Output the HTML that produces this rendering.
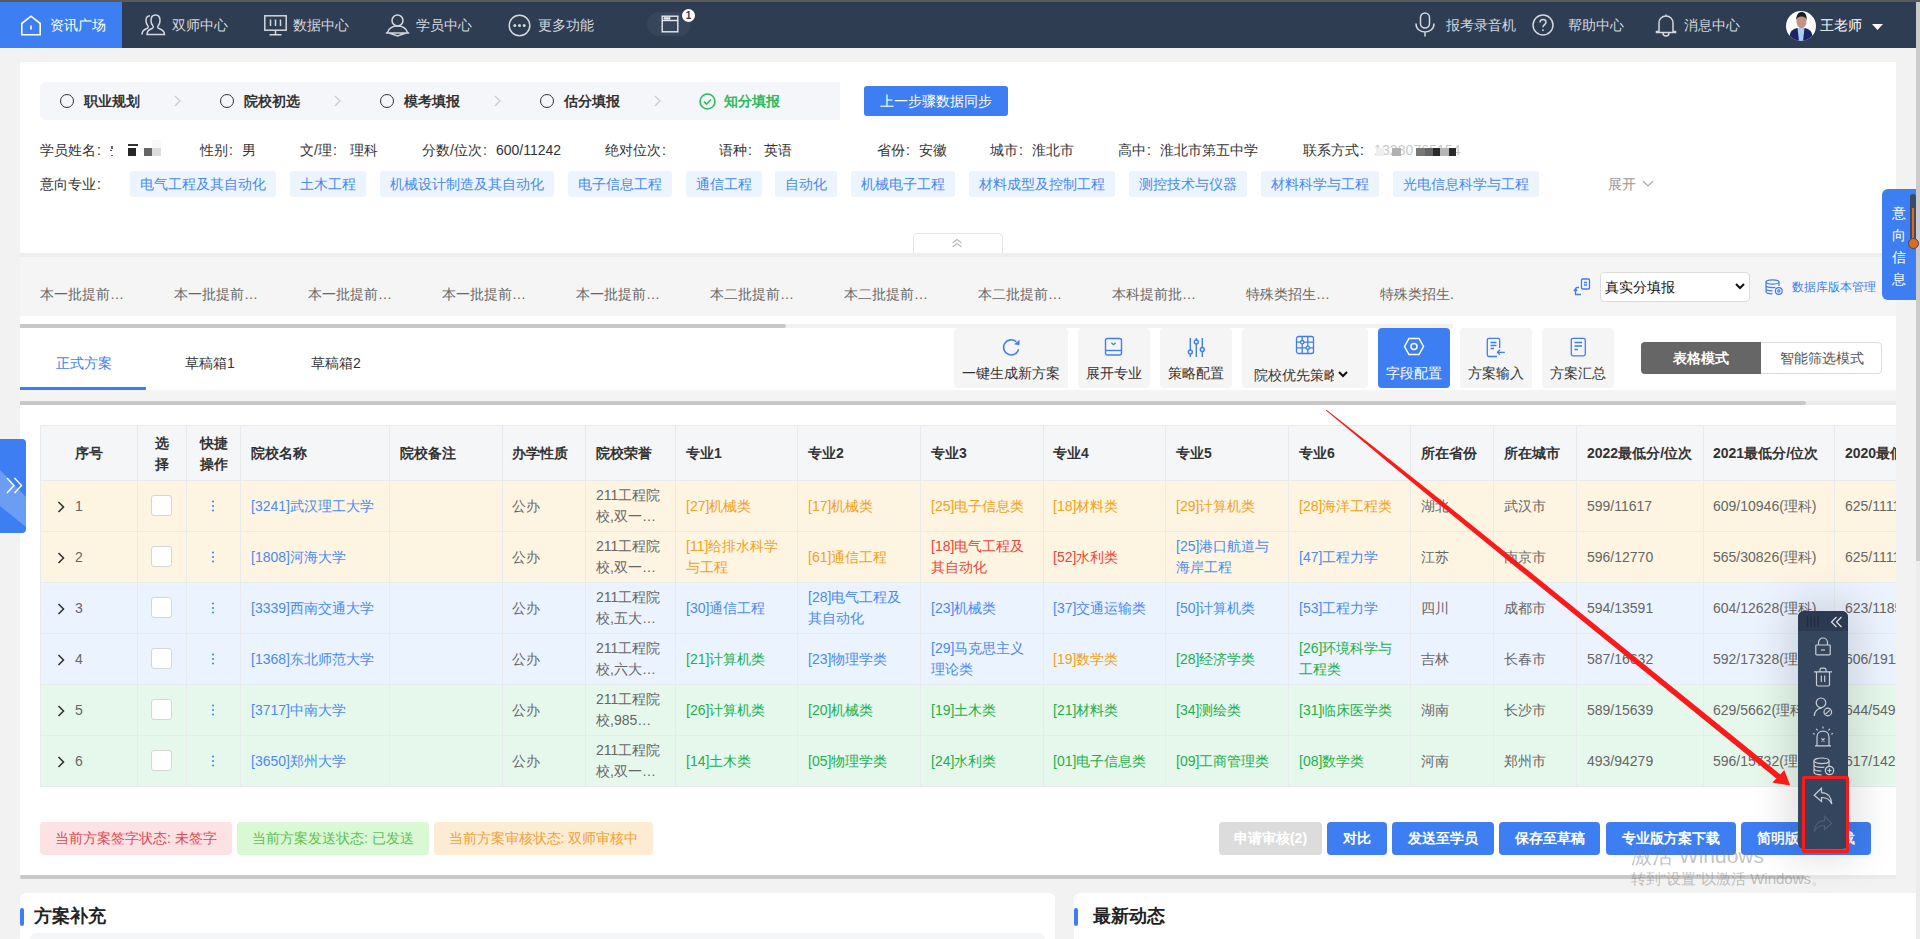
<!DOCTYPE html>
<html><head><meta charset="utf-8">
<style>
*{box-sizing:border-box;}
html,body{margin:0;padding:0;}
body{width:1920px;height:939px;overflow:hidden;position:relative;background:#f2f2f2;font-family:"Liberation Sans",sans-serif;font-size:14px;color:#333;}
.a{position:absolute;white-space:nowrap;}
.nav{position:absolute;left:0;top:0;width:1916px;height:48px;background:#2f3d53;}
.navt{position:absolute;top:16px;line-height:18px;color:#d4d8de;font-size:14px;white-space:nowrap;}
.ico{position:absolute;}
.step{position:absolute;top:92px;line-height:18px;font-weight:bold;color:#333;}
.circ{position:absolute;top:94px;width:14px;height:14px;border:1.3px solid #333;border-radius:50%;}
.chev{position:absolute;top:95px;}
.info{position:absolute;top:141px;line-height:18px;color:#333;white-space:nowrap;}
.tag{position:absolute;top:171px;height:26px;line-height:26px;padding:0 10px;background:#ecf4fe;color:#4789f3;border-radius:3px;white-space:nowrap;}
.batch{position:absolute;top:285px;line-height:18px;color:#666;white-space:nowrap;}
.tb{position:absolute;top:328px;height:60px;background:#f5f5f5;border-radius:4px;}
.tbl{position:absolute;top:364px;line-height:18px;color:#333;white-space:nowrap;}
</style></head><body>
<!-- top strip -->
<div class="a" style="left:0;top:0;width:1920px;height:2px;background:#5a5a5a;"></div>
<div class="nav" style="top:2px;height:46px;"></div>
<div class="a" style="left:0;top:2px;width:122px;height:46px;background:#3e7ef3;"></div>
<!-- right scrollbar -->
<div class="a" style="left:1916px;top:2px;width:4px;height:937px;background:#ececec;"></div>
<div class="a" style="left:1916px;top:2px;width:4px;height:559px;background:#cbcbcb;"></div>



<!-- card 1 -->
<div class="a" style="left:20px;top:62px;width:1876px;height:191px;background:#fff;"></div>
<div class="a" style="left:40px;top:82px;width:800px;height:38px;background:#f5f6fa;border-radius:6px 0 0 6px;"></div>
<div class="circ" style="left:60px"></div><div class="step" style="left:84px">职业规划</div>
<svg class="chev" style="left:174px" width="7" height="12" viewBox="0 0 7 12" fill="none" stroke="#c6c9cf" stroke-width="1.2"><path d="M1 1L6 6L1 11"/></svg>
<div class="circ" style="left:220px"></div><div class="step" style="left:244px">院校初选</div>
<svg class="chev" style="left:334px" width="7" height="12" viewBox="0 0 7 12" fill="none" stroke="#c6c9cf" stroke-width="1.2"><path d="M1 1L6 6L1 11"/></svg>
<div class="circ" style="left:380px"></div><div class="step" style="left:404px">模考填报</div>
<svg class="chev" style="left:494px" width="7" height="12" viewBox="0 0 7 12" fill="none" stroke="#c6c9cf" stroke-width="1.2"><path d="M1 1L6 6L1 11"/></svg>
<div class="circ" style="left:540px"></div><div class="step" style="left:564px">估分填报</div>
<svg class="chev" style="left:654px" width="7" height="12" viewBox="0 0 7 12" fill="none" stroke="#c6c9cf" stroke-width="1.2"><path d="M1 1L6 6L1 11"/></svg>
<svg class="ico" style="left:699px;top:93px" width="17" height="17" viewBox="0 0 17 17" fill="none" stroke="#2dba5e" stroke-width="1.6"><circle cx="8.5" cy="8.5" r="7.5"/><path d="M5 8.7L7.6 11.2L12 6.5"/></svg>
<div class="step" style="left:724px;color:#2dba5e">知分填报</div>
<div class="a" style="left:864px;top:86px;width:144px;height:30px;background:#3e7ef3;border-radius:3px;color:#fff;text-align:center;line-height:30px;">上一步骤数据同步</div>

<div class="info" style="left:40px">学员姓名<span style="display:inline-block;width:14px;padding-left:1px">:</span></div>
<div class="a" style="left:111px;top:146px;width:2px;height:3px;background:#666"></div>
<div class="a" style="left:110px;top:150px;width:2px;height:1px;background:#555"></div>
<div class="a" style="left:111px;top:155px;width:2px;height:1px;background:#666"></div>
<div class="a" style="left:128px;top:144px;width:10px;height:2px;background:#333"></div>
<div class="a" style="left:128px;top:148px;width:8px;height:8px;background:#262626"></div>
<div class="a" style="left:144px;top:148px;width:8px;height:8px;background:#646464"></div>
<div class="a" style="left:152px;top:140px;width:9px;height:8px;background:#f8f8f8"></div>
<div class="a" style="left:152px;top:148px;width:9px;height:8px;background:#dcdcdc"></div>
<div class="info" style="left:200px">性别<span style="display:inline-block;width:14px;padding-left:1px">:</span>男</div>
<div class="info" style="left:300px">文/理<span style="display:inline-block;width:14px;padding-left:1px">:</span></div><div class="info" style="left:350px">理科</div>
<div class="info" style="left:422px">分数/位次<span style="display:inline-block;width:14px;padding-left:1px">:</span>600/11242</div>
<div class="info" style="left:605px">绝对位次<span style="display:inline-block;width:14px;padding-left:1px">:</span></div>
<div class="info" style="left:719px">语种<span style="display:inline-block;width:14px;padding-left:1px">:</span></div><div class="info" style="left:764px">英语</div>
<div class="info" style="left:877px">省份<span style="display:inline-block;width:14px;padding-left:1px">:</span>安徽</div>
<div class="info" style="left:990px">城市<span style="display:inline-block;width:14px;padding-left:1px">:</span>淮北市</div>
<div class="info" style="left:1118px">高中<span style="display:inline-block;width:14px;padding-left:1px">:</span>淮北市第五中学</div>
<div class="info" style="left:1303px">联系方式<span style="display:inline-block;width:14px;padding-left:1px">:</span></div>
<div class="info" style="left:1374px;color:#c8c8c8;letter-spacing:0.1px">13280765154</div>
<div class="a" style="left:1376px;top:148px;width:8px;height:8px;background:#eeeeee"></div>
<div class="a" style="left:1392px;top:148px;width:9px;height:8px;background:#b0b0b0"></div>
<div class="a" style="left:1416px;top:148px;width:9px;height:8px;background:#777"></div>
<div class="a" style="left:1425px;top:148px;width:8px;height:8px;background:#666"></div>
<div class="a" style="left:1433px;top:148px;width:7px;height:8px;background:#2a2a2a"></div>
<div class="a" style="left:1440px;top:148px;width:9px;height:8px;background:#b5b5b5"></div>
<div class="a" style="left:1449px;top:148px;width:7px;height:8px;background:#2a2a2a"></div>
<div class="info" style="left:40px;top:175px">意向专业<span style="display:inline-block;width:14px;padding-left:1px">:</span></div>
<div class="tag" style="left:130px">电气工程及其自动化</div>
<div class="tag" style="left:290px">土木工程</div>
<div class="tag" style="left:380px">机械设计制造及其自动化</div>
<div class="tag" style="left:568px">电子信息工程</div>
<div class="tag" style="left:686px">通信工程</div>
<div class="tag" style="left:775px">自动化</div>
<div class="tag" style="left:851px">机械电子工程</div>
<div class="tag" style="left:969px">材料成型及控制工程</div>
<div class="tag" style="left:1129px">测控技术与仪器</div>
<div class="tag" style="left:1261px">材料科学与工程</div>
<div class="tag" style="left:1393px">光电信息科学与工程</div>
<div class="info" style="left:1608px;top:175px;color:#999">展开</div>
<svg class="ico" style="left:1642px;top:180px" width="12" height="8" viewBox="0 0 12 8" fill="none" stroke="#aaa" stroke-width="1.2"><path d="M1 1L6 6L11 1"/></svg>
<div class="a" style="left:913px;top:233px;width:90px;height:21px;border:1px solid #e4e4e4;border-bottom:none;border-radius:5px 5px 0 0;background:#fff;"></div>
<svg class="ico" style="left:951px;top:238px" width="12" height="10" viewBox="0 0 12 10" fill="none" stroke="#b8b8b8" stroke-width="1.1"><path d="M1.5 5L6 1.5L10.5 5M1.5 9L6 5.5L10.5 9"/></svg>


<!-- batch bar -->
<div class="a" style="left:20px;top:253px;width:1876px;height:4px;background:#eeeeee;"></div>
<div class="a" style="left:20px;top:257px;width:1876px;height:59px;background:#f5f5f5;"></div>
<div class="batch" style="left:40px">本一批提前…</div>
<div class="batch" style="left:174px">本一批提前…</div>
<div class="batch" style="left:308px">本一批提前…</div>
<div class="batch" style="left:442px">本一批提前…</div>
<div class="batch" style="left:576px">本一批提前…</div>
<div class="batch" style="left:710px">本二批提前…</div>
<div class="batch" style="left:844px">本二批提前…</div>
<div class="batch" style="left:978px">本二批提前…</div>
<div class="batch" style="left:1112px">本科提前批…</div>
<div class="batch" style="left:1246px">特殊类招生…</div>
<div class="batch" style="left:1380px">特殊类招生.</div>

<svg class="ico" style="left:1573px;top:278px" width="18" height="18" viewBox="0 0 18 18" fill="none" stroke="#3e7ef3" stroke-width="1.3"><rect x="8.5" y="1" width="8" height="10" rx="1"/><path d="M11 4.5H14M11 7H14"/><path d="M6 9.5H4.5C3.3 9.5 2.5 10.3 2.5 11.5V16.5H8"/><path d="M0.8 13L2.5 11L4.2 13"/></svg>
<div class="a" style="left:1600px;top:272px;width:150px;height:30px;background:#fff;border:1px solid #dcdcdc;border-radius:4px;"></div>
<div class="a" style="left:1605px;top:278px;line-height:18px;font-size:14px;color:#111;">真实分填报</div>
<svg class="ico" style="left:1735px;top:283px" width="10" height="7" viewBox="0 0 10 7" fill="none" stroke="#111" stroke-width="2"><path d="M1 1L5 5L9 1"/></svg>
<svg class="ico" style="left:1765px;top:279px" width="18" height="16" viewBox="0 0 18 16" fill="none" stroke="#3e7ef3" stroke-width="1.2"><ellipse cx="7.5" cy="3" rx="6.5" ry="2.2"/><path d="M1 3V12.5C1 13.8 4 14.8 7.5 14.8M14 3V7M1 6.3C1 7.6 4 8.6 7.5 8.6C8.5 8.6 9.5 8.5 10.3 8.3M1 9.5C1 10.8 4 11.8 7.5 11.8"/><circle cx="13.8" cy="12" r="3.4" fill="#f5f5f5"/><circle cx="13.8" cy="12" r="1.1"/></svg>
<div class="a" style="left:1792px;top:278px;line-height:18px;font-size:12px;color:#3e7ef3;">数据库版本管理</div>

<!-- tabs row -->
<div class="a" style="left:20px;top:316px;width:1876px;height:74px;background:#fff;"></div>
<div class="a" style="left:20px;top:324px;width:1433px;height:4px;background:#f1f1f1;"></div>
<div class="a" style="left:20px;top:324px;width:766px;height:4px;background:#c8c8c8;border-radius:0 2px 2px 0;"></div>
<div class="a" style="left:56px;top:354px;line-height:18px;color:#3e7ef3;">正式方案</div>
<div class="a" style="left:185px;top:354px;line-height:18px;color:#333;">草稿箱1</div>
<div class="a" style="left:311px;top:354px;line-height:18px;color:#333;">草稿箱2</div>
<div class="a" style="left:20px;top:387px;width:126px;height:3px;background:#3e7ef3;"></div>

<div class="tb" style="left:954px;width:114px"></div>
<svg class="ico" style="left:1001px;top:338px" width="20" height="19" viewBox="0 0 20 19" fill="none" stroke="#3e7ef3" stroke-width="1.6"><path d="M17.6 11.2A7.6 7.6 0 1 1 15.2 3.6"/><path d="M18.6 1.8L18.4 7.2L13.2 6.2Z" fill="#3e7ef3" stroke="none"/></svg>
<div class="tbl" style="left:962px">一键生成新方案</div>
<div class="tb" style="left:1078px;width:72px"></div>
<svg class="ico" style="left:1104px;top:337px" width="19" height="19" viewBox="0 0 19 19" fill="none" stroke="#3e7ef3" stroke-width="1.4"><rect x="1.5" y="1.5" width="16" height="16.5" rx="2"/><path d="M1.5 13.5H17.5"/><path d="M7.3 5.8L9.5 7.8L11.7 5.8" stroke-width="1.2"/></svg>
<div class="tbl" style="left:1086px">展开专业</div>
<div class="tb" style="left:1160px;width:72px"></div>
<svg class="ico" style="left:1187px;top:337px" width="19" height="21" viewBox="0 0 19 21" fill="none" stroke="#3e7ef3" stroke-width="1.4"><path d="M3.3 1V13M3.3 17V20M9.3 1V3M9.3 7V20M15.3 1V10.5M15.3 14.5V20"/><circle cx="3.3" cy="15" r="2"/><circle cx="9.3" cy="5" r="2"/><circle cx="15.3" cy="12.5" r="2"/></svg>
<div class="tbl" style="left:1168px">策略配置</div>
<div class="tb" style="left:1242px;width:126px"></div>
<svg class="ico" style="left:1295px;top:335px" width="20" height="20" viewBox="0 0 20 20" fill="none" stroke="#3e7ef3" stroke-width="1.3"><rect x="1.5" y="1.5" width="17" height="17" rx="2"/><path d="M7.2 1.5V18.5M12.8 1.5V18.5M1.5 7.2H18.5M1.5 12.8H18.5"/><circle cx="7.2" cy="7.2" r="1.7" fill="#f5f5f5"/><circle cx="12.8" cy="12.8" r="1.7" fill="#f5f5f5"/></svg>
<div class="tbl" style="left:1254px;top:366px;width:80px;overflow:hidden;">院校优先策略</div>
<svg class="ico" style="left:1338px;top:371px" width="10" height="7" viewBox="0 0 10 7" fill="none" stroke="#111" stroke-width="2"><path d="M1 1L5 5L9 1"/></svg>
<div class="tb" style="left:1378px;width:72px;background:#3e7ef3"></div>
<svg class="ico" style="left:1403px;top:337px" width="22" height="19" viewBox="0 0 22 19" fill="none" stroke="#fff" stroke-width="1.5"><path d="M1.5 9.5L6 1.5H16L20.5 9.5L16 17.5H6Z"/><circle cx="11" cy="9.5" r="3"/></svg>
<div class="tbl" style="left:1386px;color:#fff">字段配置</div>
<div class="tb" style="left:1460px;width:72px"></div>
<svg class="ico" style="left:1486px;top:337px" width="20" height="21" viewBox="0 0 20 21" fill="none" stroke="#3e7ef3" stroke-width="1.3"><path d="M11 19.5H3C2 19.5 1.3 18.8 1.3 17.8V3C1.3 2 2 1.3 3 1.3H12C13 1.3 13.7 2 13.7 3V11"/><path d="M4.5 5.5H10.5M4.5 8.5H10.5M4.5 11.5H8"/><path d="M18.8 15.3H11.5M14 12.8L11.5 15.3L14 17.8"/></svg>
<div class="tbl" style="left:1468px">方案输入</div>
<div class="tb" style="left:1542px;width:72px"></div>
<svg class="ico" style="left:1570px;top:337px" width="17" height="20" viewBox="0 0 17 20" fill="none" stroke="#3e7ef3" stroke-width="1.3"><rect x="1.3" y="1.3" width="14" height="17.5" rx="1.8"/><path d="M4.5 5.5H12M4.5 9H12M4.5 12.5H8"/></svg>
<div class="tbl" style="left:1550px">方案汇总</div>

<div class="a" style="left:1641px;top:342px;width:241px;height:32px;border:1px solid #dcdcdc;border-radius:4px;background:#fff;"></div>
<div class="a" style="left:1641px;top:342px;width:120px;height:32px;background:#666;border-radius:4px 0 0 4px;color:#fff;font-weight:bold;text-align:center;line-height:32px;">表格模式</div>
<div class="a" style="left:1761px;top:342px;width:121px;height:32px;color:#555;text-align:center;line-height:32px;">智能筛选模式</div>

<div class="a" style="left:20px;top:390px;width:1876px;height:11px;background:#f4f4f4;"></div>
<div class="a" style="left:20px;top:401px;width:1876px;height:4px;background:#ebebeb;"></div>
<div class="a" style="left:20px;top:401px;width:1786px;height:4px;background:#c8c8c8;border-radius:0 2px 2px 0;"></div>
<div class="a" style="left:20px;top:405px;width:1876px;height:471px;background:#fff;"></div>


<!-- table -->
<div class="a" style="left:40px;top:405px;width:1856px;height:471px;overflow:hidden;">
<div style="position:absolute;left:0;top:20px;width:1920px;height:55px;background:#f5f6f8;"></div>
<div style="position:absolute;left:0;top:75px;width:1920px;height:51px;background:#fdf5e1;"></div>
<div style="position:absolute;left:0;top:126px;width:1920px;height:51px;background:#fdf5e1;"></div>
<div style="position:absolute;left:0;top:177px;width:1920px;height:51px;background:#ebf3fe;"></div>
<div style="position:absolute;left:0;top:228px;width:1920px;height:51px;background:#ebf3fe;"></div>
<div style="position:absolute;left:0;top:279px;width:1920px;height:51px;background:#e6f8ec;"></div>
<div style="position:absolute;left:0;top:330px;width:1920px;height:51px;background:#e6f8ec;"></div>
<div style="position:absolute;left:0;top:20px;width:1920px;height:1px;background:#e8eaee;"></div>
<div style="position:absolute;left:0;top:75px;width:1920px;height:1px;background:#e8eaee;"></div>
<div style="position:absolute;left:0;top:126px;width:1920px;height:1px;background:#e8eaee;"></div>
<div style="position:absolute;left:0;top:177px;width:1920px;height:1px;background:#e8eaee;"></div>
<div style="position:absolute;left:0;top:228px;width:1920px;height:1px;background:#e8eaee;"></div>
<div style="position:absolute;left:0;top:279px;width:1920px;height:1px;background:#e8eaee;"></div>
<div style="position:absolute;left:0;top:330px;width:1920px;height:1px;background:#e8eaee;"></div>
<div style="position:absolute;left:0;top:381px;width:1920px;height:1px;background:#e8eaee;"></div>
<div style="position:absolute;left:0px;top:20px;width:1px;height:362px;background:#e8eaee;"></div>
<div style="position:absolute;left:97px;top:20px;width:1px;height:362px;background:#e8eaee;"></div>
<div style="position:absolute;left:146px;top:20px;width:1px;height:362px;background:#e8eaee;"></div>
<div style="position:absolute;left:200px;top:20px;width:1px;height:362px;background:#e8eaee;"></div>
<div style="position:absolute;left:349px;top:20px;width:1px;height:362px;background:#e8eaee;"></div>
<div style="position:absolute;left:462px;top:20px;width:1px;height:362px;background:#e8eaee;"></div>
<div style="position:absolute;left:545px;top:20px;width:1px;height:362px;background:#e8eaee;"></div>
<div style="position:absolute;left:635px;top:20px;width:1px;height:362px;background:#e8eaee;"></div>
<div style="position:absolute;left:757px;top:20px;width:1px;height:362px;background:#e8eaee;"></div>
<div style="position:absolute;left:880px;top:20px;width:1px;height:362px;background:#e8eaee;"></div>
<div style="position:absolute;left:1003px;top:20px;width:1px;height:362px;background:#e8eaee;"></div>
<div style="position:absolute;left:1125px;top:20px;width:1px;height:362px;background:#e8eaee;"></div>
<div style="position:absolute;left:1248px;top:20px;width:1px;height:362px;background:#e8eaee;"></div>
<div style="position:absolute;left:1370px;top:20px;width:1px;height:362px;background:#e8eaee;"></div>
<div style="position:absolute;left:1453px;top:20px;width:1px;height:362px;background:#e8eaee;"></div>
<div style="position:absolute;left:1536px;top:20px;width:1px;height:362px;background:#e8eaee;"></div>
<div style="position:absolute;left:1663px;top:20px;width:1px;height:362px;background:#e8eaee;"></div>
<div style="position:absolute;left:1794px;top:20px;width:1px;height:362px;background:#e8eaee;"></div>
<div style="position:absolute;left:1920px;top:20px;width:1px;height:362px;background:#e8eaee;"></div>
<style>.th{position:absolute;line-height:21px;margin-top:1px;font-weight:bold;color:#333;white-space:nowrap;}.td{position:absolute;line-height:21px;margin-top:1px;color:#666;white-space:nowrap;}</style>
<div class="th" style="left:35px;top:37px">序号</div>
<div class="th" style="left:115px;top:27px">选<br>择</div>
<div class="th" style="left:160px;top:27px">快捷<br>操作</div>
<div class="th" style="left:211px;top:37px">院校名称</div>
<div class="th" style="left:360px;top:37px">院校备注</div>
<div class="th" style="left:472px;top:37px">办学性质</div>
<div class="th" style="left:556px;top:37px">院校荣誉</div>
<div class="th" style="left:646px;top:37px">专业1</div>
<div class="th" style="left:768px;top:37px">专业2</div>
<div class="th" style="left:891px;top:37px">专业3</div>
<div class="th" style="left:1013px;top:37px">专业4</div>
<div class="th" style="left:1136px;top:37px">专业5</div>
<div class="th" style="left:1259px;top:37px">专业6</div>
<div class="th" style="left:1381px;top:37px">所在省份</div>
<div class="th" style="left:1464px;top:37px">所在城市</div>
<div class="th" style="left:1547px;top:37px">2022最低分/位次</div>
<div class="th" style="left:1673px;top:37px">2021最低分/位次</div>
<div class="th" style="left:1805px;top:37px">2020最低分/位次</div>
<svg style="position:absolute;left:17px;top:96px" width="8" height="12" viewBox="0 0 8 12" fill="none" stroke="#333" stroke-width="1.6"><path d="M1.5 1L6.5 6L1.5 11"/></svg>
<div class="td" style="left:35px;top:90.0px">1</div>
<div style="position:absolute;left:111px;top:90px;width:21px;height:21px;background:#fff;border:1px solid #d6d6d6;border-radius:3px;"></div>
<svg style="position:absolute;left:171px;top:95px" width="4" height="12" viewBox="0 0 4 12" fill="#4a8af4"><circle cx="2" cy="1.5" r="1.1"/><circle cx="2" cy="6" r="1.1"/><circle cx="2" cy="10.5" r="1.1"/></svg>
<div class="td" style="left:211px;top:90.0px;color:#4a8af4">[3241]武汉理工大学</div>
<div class="td" style="left:472px;top:90.0px">公办</div>
<div class="td" style="left:556px;top:78.5px">211工程院<br>校,双一…</div>
<div class="td" style="left:646px;top:90.0px;color:#f3a020">[27]机械类</div>
<div class="td" style="left:768px;top:90.0px;color:#f3a020">[17]机械类</div>
<div class="td" style="left:891px;top:90.0px;color:#f3a020">[25]电子信息类</div>
<div class="td" style="left:1013px;top:90.0px;color:#f3a020">[18]材料类</div>
<div class="td" style="left:1136px;top:90.0px;color:#f3a020">[29]计算机类</div>
<div class="td" style="left:1259px;top:90.0px;color:#f3a020">[28]海洋工程类</div>
<div class="td" style="left:1381px;top:90.0px">湖北</div>
<div class="td" style="left:1464px;top:90.0px">武汉市</div>
<div class="td" style="left:1547px;top:90.0px">599/11617</div>
<div class="td" style="left:1673px;top:90.0px">609/10946(理科)</div>
<div class="td" style="left:1805px;top:90.0px">625/11117</div>
<svg style="position:absolute;left:17px;top:147px" width="8" height="12" viewBox="0 0 8 12" fill="none" stroke="#333" stroke-width="1.6"><path d="M1.5 1L6.5 6L1.5 11"/></svg>
<div class="td" style="left:35px;top:141.0px">2</div>
<div style="position:absolute;left:111px;top:141px;width:21px;height:21px;background:#fff;border:1px solid #d6d6d6;border-radius:3px;"></div>
<svg style="position:absolute;left:171px;top:146px" width="4" height="12" viewBox="0 0 4 12" fill="#4a8af4"><circle cx="2" cy="1.5" r="1.1"/><circle cx="2" cy="6" r="1.1"/><circle cx="2" cy="10.5" r="1.1"/></svg>
<div class="td" style="left:211px;top:141.0px;color:#4a8af4">[1808]河海大学</div>
<div class="td" style="left:472px;top:141.0px">公办</div>
<div class="td" style="left:556px;top:129.5px">211工程院<br>校,双一…</div>
<div class="td" style="left:646px;top:129.5px;color:#f3a020">[11]给排水科学<br>与工程</div>
<div class="td" style="left:768px;top:141.0px;color:#f3a020">[61]通信工程</div>
<div class="td" style="left:891px;top:129.5px;color:#f0433a">[18]电气工程及<br>其自动化</div>
<div class="td" style="left:1013px;top:141.0px;color:#f0433a">[52]水利类</div>
<div class="td" style="left:1136px;top:129.5px;color:#4a8af4">[25]港口航道与<br>海岸工程</div>
<div class="td" style="left:1259px;top:141.0px;color:#4a8af4">[47]工程力学</div>
<div class="td" style="left:1381px;top:141.0px">江苏</div>
<div class="td" style="left:1464px;top:141.0px">南京市</div>
<div class="td" style="left:1547px;top:141.0px">596/12770</div>
<div class="td" style="left:1673px;top:141.0px">565/30826(理科)</div>
<div class="td" style="left:1805px;top:141.0px">625/11117</div>
<svg style="position:absolute;left:17px;top:198px" width="8" height="12" viewBox="0 0 8 12" fill="none" stroke="#333" stroke-width="1.6"><path d="M1.5 1L6.5 6L1.5 11"/></svg>
<div class="td" style="left:35px;top:192.0px">3</div>
<div style="position:absolute;left:111px;top:192px;width:21px;height:21px;background:#fff;border:1px solid #d6d6d6;border-radius:3px;"></div>
<svg style="position:absolute;left:171px;top:197px" width="4" height="12" viewBox="0 0 4 12" fill="#4a8af4"><circle cx="2" cy="1.5" r="1.1"/><circle cx="2" cy="6" r="1.1"/><circle cx="2" cy="10.5" r="1.1"/></svg>
<div class="td" style="left:211px;top:192.0px;color:#4a8af4">[3339]西南交通大学</div>
<div class="td" style="left:472px;top:192.0px">公办</div>
<div class="td" style="left:556px;top:180.5px">211工程院<br>校,五大…</div>
<div class="td" style="left:646px;top:192.0px;color:#4a8af4">[30]通信工程</div>
<div class="td" style="left:768px;top:180.5px;color:#4a8af4">[28]电气工程及<br>其自动化</div>
<div class="td" style="left:891px;top:192.0px;color:#4a8af4">[23]机械类</div>
<div class="td" style="left:1013px;top:192.0px;color:#4a8af4">[37]交通运输类</div>
<div class="td" style="left:1136px;top:192.0px;color:#4a8af4">[50]计算机类</div>
<div class="td" style="left:1259px;top:192.0px;color:#4a8af4">[53]工程力学</div>
<div class="td" style="left:1381px;top:192.0px">四川</div>
<div class="td" style="left:1464px;top:192.0px">成都市</div>
<div class="td" style="left:1547px;top:192.0px">594/13591</div>
<div class="td" style="left:1673px;top:192.0px">604/12628(理科)</div>
<div class="td" style="left:1805px;top:192.0px">623/11855</div>
<svg style="position:absolute;left:17px;top:249px" width="8" height="12" viewBox="0 0 8 12" fill="none" stroke="#333" stroke-width="1.6"><path d="M1.5 1L6.5 6L1.5 11"/></svg>
<div class="td" style="left:35px;top:243.0px">4</div>
<div style="position:absolute;left:111px;top:243px;width:21px;height:21px;background:#fff;border:1px solid #d6d6d6;border-radius:3px;"></div>
<svg style="position:absolute;left:171px;top:248px" width="4" height="12" viewBox="0 0 4 12" fill="#4a8af4"><circle cx="2" cy="1.5" r="1.1"/><circle cx="2" cy="6" r="1.1"/><circle cx="2" cy="10.5" r="1.1"/></svg>
<div class="td" style="left:211px;top:243.0px;color:#4a8af4">[1368]东北师范大学</div>
<div class="td" style="left:472px;top:243.0px">公办</div>
<div class="td" style="left:556px;top:231.5px">211工程院<br>校,六大…</div>
<div class="td" style="left:646px;top:243.0px;color:#20b04b">[21]计算机类</div>
<div class="td" style="left:768px;top:243.0px;color:#4a8af4">[23]物理学类</div>
<div class="td" style="left:891px;top:231.5px;color:#4a8af4">[29]马克思主义<br>理论类</div>
<div class="td" style="left:1013px;top:243.0px;color:#f3a020">[19]数学类</div>
<div class="td" style="left:1136px;top:243.0px;color:#20b04b">[28]经济学类</div>
<div class="td" style="left:1259px;top:231.5px;color:#20b04b">[26]环境科学与<br>工程类</div>
<div class="td" style="left:1381px;top:243.0px">吉林</div>
<div class="td" style="left:1464px;top:243.0px">长春市</div>
<div class="td" style="left:1547px;top:243.0px">587/16632</div>
<div class="td" style="left:1673px;top:243.0px">592/17328(理科)</div>
<div class="td" style="left:1805px;top:243.0px">606/19111</div>
<svg style="position:absolute;left:17px;top:300px" width="8" height="12" viewBox="0 0 8 12" fill="none" stroke="#333" stroke-width="1.6"><path d="M1.5 1L6.5 6L1.5 11"/></svg>
<div class="td" style="left:35px;top:294.0px">5</div>
<div style="position:absolute;left:111px;top:294px;width:21px;height:21px;background:#fff;border:1px solid #d6d6d6;border-radius:3px;"></div>
<svg style="position:absolute;left:171px;top:299px" width="4" height="12" viewBox="0 0 4 12" fill="#4a8af4"><circle cx="2" cy="1.5" r="1.1"/><circle cx="2" cy="6" r="1.1"/><circle cx="2" cy="10.5" r="1.1"/></svg>
<div class="td" style="left:211px;top:294.0px;color:#4a8af4">[3717]中南大学</div>
<div class="td" style="left:472px;top:294.0px">公办</div>
<div class="td" style="left:556px;top:282.5px">211工程院<br>校,985…</div>
<div class="td" style="left:646px;top:294.0px;color:#20b04b">[26]计算机类</div>
<div class="td" style="left:768px;top:294.0px;color:#20b04b">[20]机械类</div>
<div class="td" style="left:891px;top:294.0px;color:#20b04b">[19]土木类</div>
<div class="td" style="left:1013px;top:294.0px;color:#20b04b">[21]材料类</div>
<div class="td" style="left:1136px;top:294.0px;color:#20b04b">[34]测绘类</div>
<div class="td" style="left:1259px;top:294.0px;color:#20b04b">[31]临床医学类</div>
<div class="td" style="left:1381px;top:294.0px">湖南</div>
<div class="td" style="left:1464px;top:294.0px">长沙市</div>
<div class="td" style="left:1547px;top:294.0px">589/15639</div>
<div class="td" style="left:1673px;top:294.0px">629/5662(理科)</div>
<div class="td" style="left:1805px;top:294.0px">644/5491</div>
<svg style="position:absolute;left:17px;top:351px" width="8" height="12" viewBox="0 0 8 12" fill="none" stroke="#333" stroke-width="1.6"><path d="M1.5 1L6.5 6L1.5 11"/></svg>
<div class="td" style="left:35px;top:345.0px">6</div>
<div style="position:absolute;left:111px;top:345px;width:21px;height:21px;background:#fff;border:1px solid #d6d6d6;border-radius:3px;"></div>
<svg style="position:absolute;left:171px;top:350px" width="4" height="12" viewBox="0 0 4 12" fill="#4a8af4"><circle cx="2" cy="1.5" r="1.1"/><circle cx="2" cy="6" r="1.1"/><circle cx="2" cy="10.5" r="1.1"/></svg>
<div class="td" style="left:211px;top:345.0px;color:#4a8af4">[3650]郑州大学</div>
<div class="td" style="left:472px;top:345.0px">公办</div>
<div class="td" style="left:556px;top:333.5px">211工程院<br>校,双一…</div>
<div class="td" style="left:646px;top:345.0px;color:#20b04b">[14]土木类</div>
<div class="td" style="left:768px;top:345.0px;color:#20b04b">[05]物理学类</div>
<div class="td" style="left:891px;top:345.0px;color:#20b04b">[24]水利类</div>
<div class="td" style="left:1013px;top:345.0px;color:#20b04b">[01]电子信息类</div>
<div class="td" style="left:1136px;top:345.0px;color:#20b04b">[09]工商管理类</div>
<div class="td" style="left:1259px;top:345.0px;color:#20b04b">[08]数学类</div>
<div class="td" style="left:1381px;top:345.0px">河南</div>
<div class="td" style="left:1464px;top:345.0px">郑州市</div>
<div class="td" style="left:1547px;top:345.0px">493/94279</div>
<div class="td" style="left:1673px;top:345.0px">596/15732(理科)</div>
<div class="td" style="left:1805px;top:345.0px">617/14211</div>
</div>


<!-- status badges -->
<div class="a" style="left:40px;top:822px;width:192px;height:33px;background:#fde2e5;border-radius:4px;color:#e2474d;text-align:center;line-height:33px;">当前方案签字状态: 未签字</div>
<div class="a" style="left:237px;top:822px;width:192px;height:33px;background:#d9f8d3;border-radius:4px;color:#5fbf5a;text-align:center;line-height:33px;">当前方案发送状态: 已发送</div>
<div class="a" style="left:434px;top:822px;width:219px;height:33px;background:#fdebd3;border-radius:4px;color:#f0a133;text-align:center;line-height:33px;">当前方案审核状态: 双师审核中</div>
<style>.btn{position:absolute;top:822px;height:33px;line-height:33px;border-radius:4px;background:#3e7ef3;color:#fff;font-weight:bold;text-align:center;white-space:nowrap;}</style>
<div class="btn" style="left:1219px;width:103px;background:#dcdcdc;">申请审核(2)</div>
<div class="btn" style="left:1327px;width:60px;">对比</div>
<div class="btn" style="left:1392px;width:102px;">发送至学员</div>
<div class="btn" style="left:1499px;width:101px;">保存至草稿</div>
<div class="btn" style="left:1606px;width:130px;">专业版方案下载</div>
<div class="btn" style="left:1741px;width:130px;">简明版方案下载</div>
<!-- card bottom scrollbar -->
<div class="a" style="left:20px;top:875px;width:1876px;height:4px;background:#ebebeb;"></div>
<div class="a" style="left:20px;top:875px;width:1785px;height:4px;background:#c8c8c8;border-radius:2px;"></div>

<!-- bottom cards -->
<div class="a" style="left:20px;top:893px;width:1035px;height:60px;background:#fff;border-radius:6px;"></div>
<div class="a" style="left:20px;top:908px;width:4px;height:18px;background:#3e7ef3;border-radius:2px;"></div>
<div class="a" style="left:34px;top:905px;line-height:22px;font-size:18px;font-weight:bold;color:#222;">方案补充</div>
<div class="a" style="left:30px;top:933px;width:1015px;height:20px;background:#f5f6f8;border-radius:6px;"></div>
<div class="a" style="left:1074px;top:893px;width:842px;height:60px;background:#fff;border-radius:6px 0 0 0;"></div>
<div class="a" style="left:1074px;top:908px;width:4px;height:18px;background:#3e7ef3;border-radius:2px;"></div>
<div class="a" style="left:1093px;top:905px;line-height:22px;font-size:18px;font-weight:bold;color:#222;">最新动态</div>

<!-- left expand tab -->
<svg class="ico" style="left:0;top:439px" width="26" height="94" viewBox="0 0 26 94"><defs><clipPath id="lt"><path d="M0 0H22A4 4 0 0 1 26 4V90A4 4 0 0 1 22 94H0Z"/></clipPath></defs><g clip-path="url(#lt)"><rect width="26" height="94" fill="#3e7ef3"/><path d="M0 31L26 58V88L0 67Z" fill="#6c9df5"/></g><path d="M7 39L14 46.5L7 54M14.5 39L21.5 46.5L14.5 54" fill="none" stroke="#fff" stroke-width="1.4"/></svg>

<!-- right intention tab -->
<div class="a" style="left:1882px;top:189px;width:34px;height:111px;background:#3e7ef3;border-radius:6px 0 0 6px;"></div>
<div class="a" style="left:1891px;top:202px;width:16px;line-height:22px;font-size:14px;color:#fff;white-space:normal;text-align:center;">意<br>向<br>信<br>息</div>
<div class="a" style="left:1910px;top:194px;width:6px;height:50px;background:#3b4a66;border-radius:3px;"></div>
<div class="a" style="left:1912px;top:208px;width:2px;height:34px;background:#e06a1c;"></div>
<div class="a" style="left:1908px;top:238px;width:11px;height:11px;background:#e06a1c;border:1.5px solid #3b4a66;border-radius:50%;"></div>

<!-- nav items -->
<svg class="ico" style="left:20px;top:15px" width="22" height="21" viewBox="0 0 22 21" fill="none" stroke="#fff" stroke-width="1.6"><path d="M1.8 8.5 L11 1.2 L20.2 8.5 V19.8 H1.8 Z"/><path d="M11 10.5 V14.5"/></svg>
<div class="navt" style="left:50px;color:#fff">资讯广场</div>
<svg class="ico" style="left:141px;top:14px" width="25" height="22" viewBox="0 0 25 22" fill="none" stroke="#d4d8de" stroke-width="1.5"><path d="M6 20.5 H23.5 C23.5 17 21 15.5 18 14.5 C17 14 16.5 13 17 12 C18.5 10.5 19 8.5 19 6.5 C19 3 17 1 14.5 1 C12 1 10 3 10 6.5 C10 8.5 10.5 10.5 12 12 C12.5 13 12 14 11 14.5 C8 15.5 6 17 6 20.5 Z"/><path d="M9 1.8 C6.5 2 5 4 5 6.5 C5 8.5 5.5 10.5 7 12 C7.5 13 7 14 6 14.5 C3 15.5 1 17 1 20.5"/></svg>
<div class="navt" style="left:172px">双师中心</div>
<svg class="ico" style="left:264px;top:15px" width="23" height="21" viewBox="0 0 23 21" fill="none" stroke="#d4d8de" stroke-width="1.5"><rect x="0.8" y="0.8" width="21.4" height="14.4"/><path d="M6.5 4.5V11M11.5 4.5V11M16.5 4.5V11M11.5 15.2V19.8M5.5 19.8H17.5"/></svg>
<div class="navt" style="left:293px">数据中心</div>
<svg class="ico" style="left:385px;top:14px" width="25" height="23" viewBox="0 0 25 23" fill="none" stroke="#d4d8de" stroke-width="1.5"><circle cx="12.5" cy="6.5" r="5.5"/><path d="M2.5 18.5 C4 14 8 12 12.5 12 C17 12 21 14 22.5 18.5 L12.5 22 Z M0.8 19 L24.2 19"/></svg>
<div class="navt" style="left:416px">学员中心</div>
<svg class="ico" style="left:508px;top:14px" width="23" height="23" viewBox="0 0 23 23" fill="none" stroke="#d4d8de" stroke-width="1.5"><circle cx="11.5" cy="11.5" r="10.3"/><circle cx="6.8" cy="11.5" r="1.5" fill="#d4d8de" stroke="none"/><circle cx="11.5" cy="11.5" r="1.5" fill="#d4d8de" stroke="none"/><circle cx="16.2" cy="11.5" r="1.5" fill="#d4d8de" stroke="none"/></svg>
<div class="navt" style="left:538px">更多功能</div>
<div class="a" style="left:647px;top:12px;width:44px;height:24px;border-radius:12px;background:#37465a;"></div>
<svg class="ico" style="left:661px;top:15px" width="18" height="18" viewBox="0 0 18 18" fill="none" stroke="#e8eaee" stroke-width="1.4"><rect x="1.2" y="1.2" width="15.6" height="15.6"/><path d="M1.2 5.5H16.8"/><circle cx="3.8" cy="3.4" r="0.6" fill="#e8eaee"/><circle cx="6" cy="3.4" r="0.6" fill="#e8eaee"/><circle cx="8.2" cy="3.4" r="0.6" fill="#e8eaee"/></svg>
<div class="a" style="left:682px;top:9px;width:13px;height:13px;border-radius:50%;background:#fff;color:#2f3d53;font-size:10px;line-height:13px;text-align:center;font-weight:bold;">1</div>

<svg class="ico" style="left:1414px;top:12px" width="22" height="25" viewBox="0 0 22 25" fill="none" stroke="#d4d8de" stroke-width="1.5"><rect x="6.5" y="1" width="9" height="15" rx="4.5"/><path d="M2 11.5 C2 17 6 20 11 20 C16 20 20 17 20 11.5 M11 20 V24.5"/></svg>
<div class="navt" style="left:1446px">报考录音机</div>
<svg class="ico" style="left:1532px;top:14px" width="22" height="22" viewBox="0 0 22 22" fill="none" stroke="#d4d8de" stroke-width="1.5"><circle cx="11" cy="11" r="10"/><path d="M8 8.5 C8 6.5 9.3 5.5 11 5.5 C12.8 5.5 14 6.6 14 8.2 C14 10.5 11 10.8 11 13.2"/><circle cx="11" cy="16.2" r="0.9" fill="#d4d8de" stroke="none"/></svg>
<div class="navt" style="left:1568px">帮助中心</div>
<svg class="ico" style="left:1655px;top:13px" width="22" height="24" viewBox="0 0 22 24" fill="none" stroke="#d4d8de" stroke-width="1.5"><path d="M11 1.5 V3 M4 18.5 V10 C4 6 7 3 11 3 C15 3 18 6 18 10 V18.5 H20.5 V19.5 H1.5 V18.5 Z M8 20 C8 22 9.3 23 11 23 C12.7 23 14 22 14 20"/></svg>
<div class="navt" style="left:1684px">消息中心</div>
<svg class="ico" style="left:1786px;top:11px" width="30" height="30" viewBox="0 0 30 30"><defs><clipPath id="av"><circle cx="15" cy="15" r="15"/></clipPath></defs><g clip-path="url(#av)"><rect width="30" height="30" fill="#fdfdfd"/><path d="M3 30 L4 23 C5 19 8 18 11 17 L19 17 C22 18 25 19 26 23 L27 30 Z" fill="#1a2466"/><path d="M11.5 17 L18.5 17 L17 30 L13 30 Z" fill="#a9cdee"/><ellipse cx="15.5" cy="10.5" rx="5" ry="6.8" fill="#c49282"/><path d="M10.3 9.5 C10 4 12.5 1 15.5 1 C18.5 1 21 3 20.8 9.5 C20 6.5 18.5 5.5 15.5 5.5 C12.5 5.5 11 6.5 10.3 9.5Z" fill="#1d1d1d"/></g></svg>
<div class="navt" style="left:1820px;color:#fff">王老师</div>
<svg class="ico" style="left:1872px;top:24px" width="11" height="6" viewBox="0 0 11 6"><path d="M0 0H11L5.5 6Z" fill="#fff"/></svg>


<!-- floating toolbar -->
<div class="a" style="left:1798px;top:611px;width:50px;height:238px;background:#34465e;border-radius:6px;box-shadow:0 0 40px 10px rgba(0,0,0,0.13);overflow:hidden;">
 <div style="position:absolute;left:0;top:0;width:50px;height:20px;background:#2b3a51;"></div>
</div>
<svg class="ico" style="left:1806px;top:616px" width="16" height="11" viewBox="0 0 16 11" stroke="#1f2b3d" stroke-width="1.2"><path d="M1.5 0.5V10.5M5 0.5V10.5M8.5 0.5V10.5M12 0.5V10.5"/></svg>
<svg class="ico" style="left:1830px;top:616px" width="13" height="12" viewBox="0 0 13 12" fill="none" stroke="#d8dce2" stroke-width="1.3"><path d="M6.5 1L1.5 6L6.5 11M11.5 1L6.5 6L11.5 11"/></svg>
<svg class="ico" style="left:1814px;top:637px" width="18" height="19" viewBox="0 0 18 19" fill="none" stroke="#c9ced6" stroke-width="1.2"><path d="M4.5 8V5.5C4.5 3 6.5 1 9 1C11.5 1 13.5 3 13.5 5.5V8"/><rect x="1.8" y="8" width="14.4" height="9.8" rx="0.8"/><path d="M7 13H11"/></svg>
<svg class="ico" style="left:1813px;top:667px" width="20" height="20" viewBox="0 0 20 20" fill="none" stroke="#c9ced6" stroke-width="1.2"><path d="M1 4.8H19M7 4.8V2.8C7 1.8 7.8 1.2 8.8 1.2H11.2C12.2 1.2 13 1.8 13 2.8V4.8M3.5 4.8V17.5C3.5 18.3 4.2 19 5 19H15C15.8 19 16.5 18.3 16.5 17.5V4.8M8.3 8.5V15M11.7 8.5V15"/></svg>
<svg class="ico" style="left:1813px;top:697px" width="20" height="20" viewBox="0 0 20 20" fill="none" stroke="#c9ced6" stroke-width="1.2"><circle cx="8" cy="5.8" r="4.8"/><path d="M1.2 19C1.5 14.5 4.5 11.3 8.5 11.2"/><circle cx="14.8" cy="15" r="3.8"/><path d="M12.2 17.4L17.4 12.6"/></svg>
<svg class="ico" style="left:1812px;top:726px" width="22" height="21" viewBox="0 0 22 21" fill="none" stroke="#c9ced6" stroke-width="1.2"><path d="M5 19.5V11C5 7.5 7.5 5.2 11 5.2C14.5 5.2 17 7.5 17 11V19.5M3 19.8H19M11 0.5V2.5M4.2 2.8L5.6 4.3M17.8 2.8L16.4 4.3M1 7.5L2.8 8.2M21 7.5L19.2 8.2M9.5 12.5L12.5 15.5M12.5 12.5L9.5 15.5"/></svg>
<svg class="ico" style="left:1813px;top:757px" width="22" height="19" viewBox="0 0 22 19" fill="none" stroke="#c9ced6" stroke-width="1.2"><ellipse cx="8.5" cy="3.8" rx="7.5" ry="2.8"/><path d="M1 3.8V15C1 16.6 4.3 17.8 8.5 17.8M16 3.8V9M1 7.5C1 9.1 4.3 10.3 8.5 10.3C9.5 10.3 10.5 10.2 11.4 10.1M1 11.2C1 12.8 4.3 14 8.5 14"/><circle cx="16.5" cy="13.5" r="4.2" fill="#34465e"/><path d="M16.5 11.3V15.7M14.3 13.5H18.7"/></svg>
<svg class="ico" style="left:1813px;top:787px" width="20" height="18" viewBox="0 0 20 18" fill="none" stroke="#c9ced6" stroke-width="1.2"><path d="M8.5 1.2L1.2 8.2L8.5 14.5V10.5C13.5 10.3 16.8 12.5 18.8 17C18.6 10.5 15 5.8 8.5 5.6Z"/></svg>
<svg class="ico" style="left:1813px;top:815px" width="20" height="18" viewBox="0 0 20 18" fill="none" stroke="#4d5d74" stroke-width="1.2"><path d="M11.5 1.2L18.8 8.2L11.5 14.5V10.5C6.5 10.3 3.2 12.5 1.2 17C1.4 10.5 5 5.8 11.5 5.6Z"/></svg>
<div class="a" style="left:1802px;top:776px;width:47px;height:77px;border:3px solid #fa1a1a;border-radius:2px;"></div>

<!-- red arrow -->
<svg class="ico" style="left:0;top:0;pointer-events:none" width="1920" height="939" viewBox="0 0 1920 939"><polygon points="1325.9,410.5 1356.6,436.1 1387.3,461.7 1433.6,499.9 1518.9,569.4 1777.2,779.2 1780.8,774.8 1522.0,565.5 1436.4,496.5 1389.4,459.2 1358.0,434.4 1326.5,409.7" fill="#fa1a1a"/><polygon points="1790.2,785.6 1772.3,782.6 1778,777 1784.3,770" fill="#fa1a1a"/></svg>

<!-- windows watermark -->
<div class="a" style="left:1631px;top:844px;line-height:24px;font-size:21px;color:rgba(120,120,120,0.45);">激活 Windows</div>
<div class="a" style="left:1631px;top:870px;line-height:18px;font-size:15px;color:rgba(120,120,120,0.45);">转到“设置”以激活 Windows。</div>

</body></html>
